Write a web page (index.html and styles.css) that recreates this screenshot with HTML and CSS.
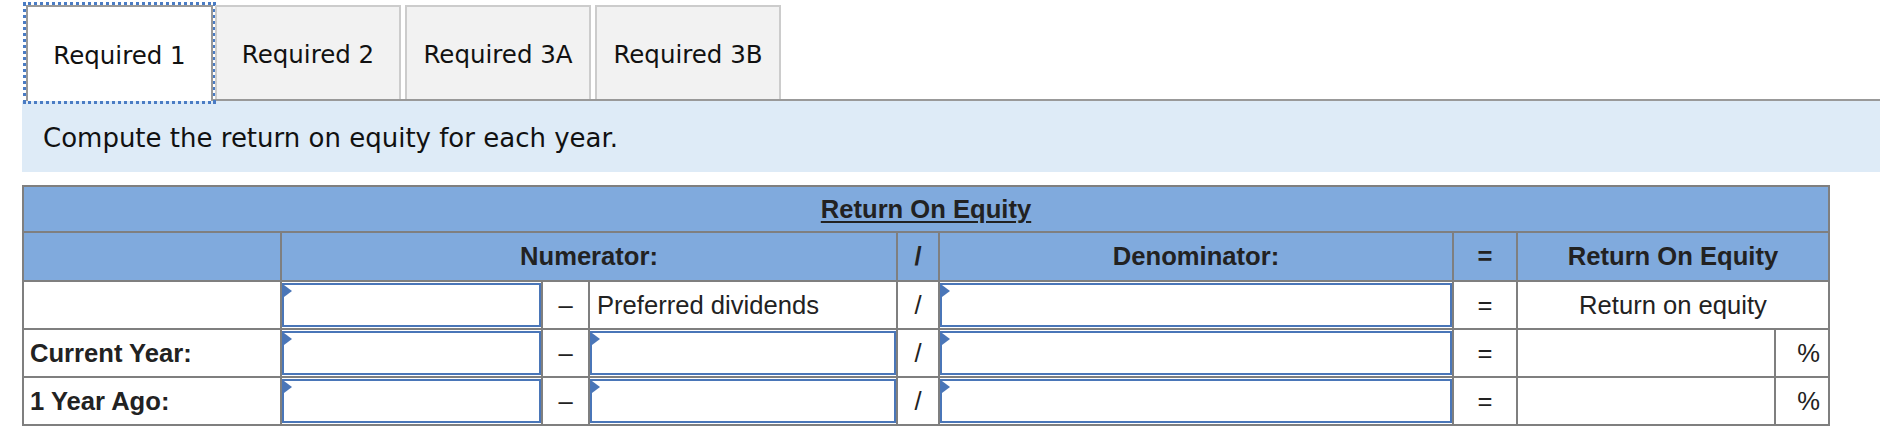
FILE: index.html
```html
<!DOCTYPE html>
<html lang="en">
<head>
<meta charset="utf-8">
<title>Return On Equity</title>
<link rel="stylesheet" href="styles.css">
</head>
<body>
<div class="page">
  <div class="tabs">
    <div class="tab active">Required 1</div>
    <div class="tab">Required 2</div>
    <div class="tab">Required 3A</div>
    <div class="tab">Required 3B</div>
  </div>
  <div class="prompt">Compute the return on equity for each year.</div>

  <div class="roe">
    <div class="cell head title"><span class="u">Return On Equity</span></div>

    <div class="cell head"></div>
    <div class="cell head c span3">Numerator:</div>
    <div class="cell head c">/</div>
    <div class="cell head c">Denominator:</div>
    <div class="cell head c">=</div>
    <div class="cell head c span2">Return On Equity</div>

    <div class="cell"></div>
    <div class="cell"><span class="field"><input type="text"></span></div>
    <div class="cell c">–</div>
    <div class="cell l">Preferred dividends</div>
    <div class="cell c">/</div>
    <div class="cell"><span class="field"><input type="text"></span></div>
    <div class="cell c">=</div>
    <div class="cell c span2">Return on equity</div>

    <div class="cell label">Current Year:</div>
    <div class="cell"><span class="field"><input type="text"></span></div>
    <div class="cell c">–</div>
    <div class="cell"><span class="field"><input type="text"></span></div>
    <div class="cell c">/</div>
    <div class="cell"><span class="field"><input type="text"></span></div>
    <div class="cell c">=</div>
    <div class="cell"></div>
    <div class="cell r">%</div>

    <div class="cell label">1 Year Ago:</div>
    <div class="cell"><span class="field"><input type="text"></span></div>
    <div class="cell c">–</div>
    <div class="cell"><span class="field"><input type="text"></span></div>
    <div class="cell c">/</div>
    <div class="cell"><span class="field"><input type="text"></span></div>
    <div class="cell c">=</div>
    <div class="cell"></div>
    <div class="cell r">%</div>
  </div>
</div>
</body>
</html>
```
FILE: styles.css
```css
html, body {
  margin: 0;
  padding: 0;
  background: #ffffff;
}

.page {
  padding-left: 22px;
}

/* ---------- tabs ---------- */
.tabs {
  display: flex;
  align-items: flex-end;
  gap: 4px;
  margin-left: 4px;
  padding-top: 5px;
  border-bottom: 2px solid #999999;
  font-family: "DejaVu Sans", Verdana, sans-serif;
  font-size: 24.5px;
  color: #111111;
}

.tab {
  box-sizing: border-box;
  width: 186px;
  height: 94px;
  display: flex;
  align-items: center;
  justify-content: center;
  padding-top: 3px;
  background: #f2f2f2;
  border: 2px solid #cccccc;
  border-bottom: 0;
}

.tab.active {
  width: 187px;
  height: 96px;
  margin-right: -2px;
  margin-bottom: -2px;
  background: #ffffff;
  border-color: #999999;
  outline: 3px dotted #4a7cc4;
}

/* ---------- prompt band ---------- */
.prompt {
  box-sizing: border-box;
  height: 71px;
  padding: 3px 0 0 21px;
  display: flex;
  align-items: center;
  background: #deebf7;
  font-family: "DejaVu Sans", Verdana, sans-serif;
  font-size: 26px;
  color: #111111;
}

/* ---------- table ---------- */
.roe {
  display: grid;
  grid-template-columns: 256px 259px 45px 306px 40px 512px 62px 256px 52px;
  grid-template-rows: 44px 47px 46px 46px 46px;
  gap: 2px;
  padding: 2px;
  width: max-content;
  margin-top: 13px;
  background: #7f7f7f;
  font-family: "Liberation Sans", Arial, Helvetica, sans-serif;
  font-size: 25.6px;
  color: #222222;
}

.cell {
  display: flex;
  align-items: center;
  background: #ffffff;
  min-width: 0;
}

.cell.head {
  background: #80aadd;
  font-weight: bold;
}

.cell.title {
  grid-column: 1 / -1;
  justify-content: center;
  padding-top: 1px;
}

.u {
  text-decoration: underline;
  text-decoration-thickness: 2px;
  text-underline-offset: 3px;
}

.c { justify-content: center; }
.l { padding-left: 7px; }
.r { justify-content: flex-end; padding-right: 8px; }
.label { font-weight: bold; padding-left: 6px; }

.span3 { grid-column: span 3; }
.span2 { grid-column: span 2; }

.cell:has(.field) {
  align-items: flex-start;
}

.field {
  position: relative;
  display: block;
  box-sizing: border-box;
  width: 100%;
  height: 44px;
  margin-top: 1px;
  border: 2px solid #4a76b8;
  background: #ffffff;
}

.field::before {
  content: "";
  position: absolute;
  left: 0;
  top: 0;
  border-left: 8px solid #4a76b8;
  border-top: 6px solid transparent;
  border-bottom: 6px solid transparent;
}

.field input {
  box-sizing: border-box;
  width: 100%;
  height: 100%;
  margin: 0;
  padding: 0 8px;
  border: 0;
  outline: 0;
  background: transparent;
  font: inherit;
}
```
